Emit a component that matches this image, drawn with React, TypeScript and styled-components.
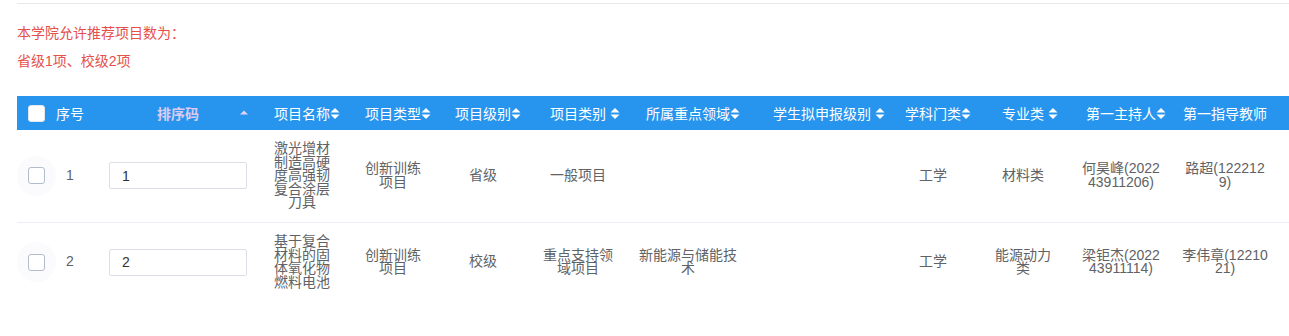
import React from "react";
import styled, { createGlobalStyle } from "styled-components";

const GlobalStyle = createGlobalStyle`
  body {
    margin: 0;
    background: #fff;
    font-family: "Liberation Sans", "Noto Sans CJK SC", sans-serif;
    font-size: 14px;
  }
`;

const cols = "39px 28px 174px 88px 94px 86px 104px 116px 152px 70px 110px 86px 122px 1fr";

const Page = styled.div`
  padding: 3px 0 0 17px;
  overflow: hidden;
`;
const Divider = styled.div`
  border-top: 1px solid #e8e8e8;
`;
const Notice = styled.div`
  margin-top: 15px;
  color: #e5504c;
  line-height: 28px;
`;
const Table = styled.div`
  margin-top: 21px;
`;
const HeadRow = styled.div`
  display: grid;
  grid-template-columns: ${cols};
  height: 34px;
  background: #2795ee;
  color: #fff;
`;
const HeadCell = styled.div<{ $padL?: number; $padR?: number }>`
  position: relative;
  display: flex;
  align-items: center;
  justify-content: center;
  white-space: nowrap;
  padding: 0 ${(p) => p.$padR ?? 0}px 0 ${(p) => p.$padL ?? 0}px;
`;
const Label = styled.span<{ $active?: boolean }>`
  position: relative;
  color: ${(p) => (p.$active ? "#dccbf0" : "#fff")};
  font-weight: ${(p) => (p.$active ? 700 : 400)};
`;
const SortIcon = styled.svg<{ $gap?: boolean }>`
  position: absolute;
  left: 100%;
  top: 50%;
  margin-top: -5px;
  margin-left: ${(p) => (p.$gap ? 4 : 0)}px;
`;
const Caret = styled.svg`
  position: absolute;
  right: 10px;
  top: 14px;
`;
const Halo = styled.span`
  display: flex;
  align-items: center;
  justify-content: center;
  width: 40px;
  height: 40px;
  border-radius: 50%;
  background: #fbfbfd;
`;
const Check = styled.span<{ $head?: boolean }>`
  display: inline-block;
  width: 17px;
  height: 17px;
  box-sizing: border-box;
  border-radius: 3px;
  background: #fff;
  border: 1px solid ${(p) => (p.$head ? "#e4e7ed" : "#b3bccd")};
`;
const BodyRow = styled.div<{ $last?: boolean }>`
  display: grid;
  grid-template-columns: ${cols};
  padding: 12px 0 12px;
  border-bottom: ${(p) => (p.$last ? "none" : "1px solid #ebeef5")};
  color: #606266;
  line-height: 13.6px;
`;
const Cell = styled.div<{ $padL?: number; $padR?: number }>`
  display: flex;
  align-items: center;
  justify-content: center;
  text-align: center;
  padding: 0 ${(p) => p.$padR ?? 0}px 0 ${(p) => p.$padL ?? 0}px;
`;
const CellText = styled.div<{ $w?: number }>`
  max-width: ${(p) => (p.$w ? `${p.$w}px` : "none")};
  word-break: break-all;
`;
const OrderInput = styled.input`
  width: 138px;
  height: 27px;
  box-sizing: border-box;
  border: 1px solid #dcdfe6;
  border-radius: 2px;
  padding: 0 12px;
  font: inherit;
  color: #333;
  outline: none;
`;

const Arrows = ({ gap }: { gap?: boolean }) => (
  <SortIcon $gap={gap} width="10" height="11" viewBox="0 0 10 11">
    <polygon points="0.5,4.5 5,0 9.5,4.5" fill="#fff" />
    <polygon points="0.5,6.5 5,11 9.5,6.5" fill="#fff" />
  </SortIcon>
);

type Head = { label: string; sort?: "none" | "tight" | "gap" };

const heads: Head[] = [
  { label: "项目名称", sort: "tight" },
  { label: "项目类型", sort: "tight" },
  { label: "项目级别", sort: "tight" },
  { label: "项目类别", sort: "gap" },
  { label: "所属重点领域", sort: "tight" },
  { label: "学生拟申报级别", sort: "gap" },
  { label: "学科门类", sort: "tight" },
  { label: "专业类", sort: "gap" },
  { label: "第一主持人", sort: "tight" },
  { label: "第一指导教师", sort: "none" },
];

// max text width per column, so the lines wrap where the original does
const widths = [64, 64, 0, 80, 104, 0, 0, 64, 82, 86.5];

const rows = [
  {
    no: 1,
    cells: ["激光增材制造高硬度高强韧复合涂层刀具", "创新训练项目", "省级", "一般项目", "", "", "工学", "材料类", "何昊峰(202243911206)", "路超(1222129)"],
  },
  {
    no: 2,
    cells: ["基于复合材料的固体氧化物燃料电池", "创新训练项目", "校级", "重点支持领域项目", "新能源与储能技术", "", "工学", "能源动力类", "梁钜杰(202243911114)", "李伟章(1221021)"],
  },
];

export default function App() {
  return (
    <Page>
      <GlobalStyle />
      <Divider />
      <Notice>
        <div>本学院允许推荐项目数为：</div>
        <div>省级1项、校级2项</div>
      </Notice>
      <Table>
        <HeadRow>
          <HeadCell>
            <Check $head />
          </HeadCell>
          <HeadCell>
            <Label>序号</Label>
          </HeadCell>
          <HeadCell $padL={25} $padR={11}>
            <Label $active>排序码</Label>
            <Caret width="8" height="5" viewBox="0 0 8 5">
              <polygon points="0,4.5 4,0.5 8,4.5" fill="#e6d2ee" />
            </Caret>
          </HeadCell>
          {heads.map((h) => (
            <HeadCell key={h.label}>
              <Label>
                {h.label}
                {h.sort !== "none" && <Arrows gap={h.sort === "gap"} />}
              </Label>
            </HeadCell>
          ))}
          <HeadCell />
        </HeadRow>
        {rows.map((r, i) => (
          <BodyRow key={r.no} $last={i === rows.length - 1}>
            <Cell>
              <Halo>
                <Check />
              </Halo>
            </Cell>
            <Cell>{r.no}</Cell>
            <Cell $padL={25} $padR={11}>
              <OrderInput defaultValue={String(r.no)} />
            </Cell>
            {r.cells.map((c, j) => (
              <Cell key={j}>
                <CellText $w={widths[j]}>{c}</CellText>
              </Cell>
            ))}
            <Cell />
          </BodyRow>
        ))}
      </Table>
    </Page>
  );
}
